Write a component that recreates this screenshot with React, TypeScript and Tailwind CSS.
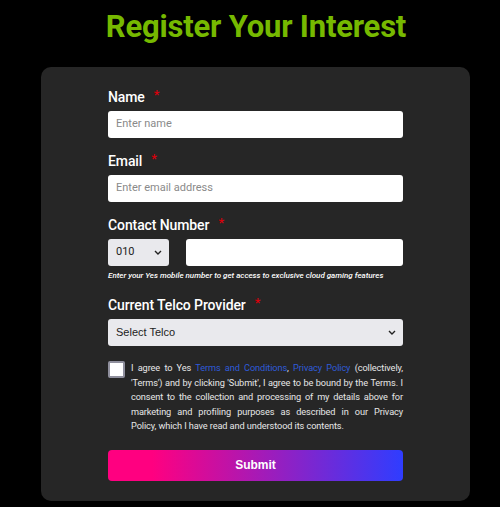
import React from "react";

const labelFont = { fontFamily: "Roboto, 'Liberation Sans', sans-serif" };

function Label({ children }: { children: React.ReactNode }) {
  return (
    <div className="flex items-start text-[14px] font-medium leading-[18px] tracking-[-0.1px] text-white" style={labelFont}>
      <span>{children}</span>
      <span className="ml-[9px] text-[13px] leading-[14px] text-[#d9000b]">*</span>
    </div>
  );
}

function Chevron() {
  return (
    <svg width="8" height="5" viewBox="0 0 8 5" className="shrink-0">
      <path d="M1 1l3 3 3-3" fill="none" stroke="#222" strokeWidth="1.4" />
    </svg>
  );
}

const consentLines: React.ReactNode[] = [
  <>
    I agree to Yes <span className="text-[#2f5bd8]">Terms and Conditions</span>,{" "}
    <span className="text-[#2f5bd8]">Privacy Policy</span> (collectively,
  </>,
  <>'Terms') and by clicking 'Submit', I agree to be bound by the Terms. I</>,
  <>consent to the collection and processing of my details above for</>,
  <>marketing and profiling purposes as described in our Privacy</>,
];

export default function App() {
  return (
    <div className="min-h-[507px] w-[500px] bg-black pt-[9px]" style={labelFont}>
      <h1 className="pl-[12px] text-center text-[31px] font-bold leading-[36px] tracking-[-0.2px] text-[#76b900]">
        Register Your Interest
      </h1>
      <div className="ml-[41px] mr-[30px] mt-[22px] rounded-[10px] bg-[#262626] px-[67px] pb-[20px] pt-[21px]">
        <Label>Name</Label>
        <div className="mt-[5px] flex h-[27px] items-center rounded-[3px] bg-white px-[8px] text-[11px] text-[#8a8a8a]">
          Enter name
        </div>

        <div className="mt-[14px]">
          <Label>Email</Label>
        </div>
        <div className="mt-[5px] flex h-[27px] items-center rounded-[3px] bg-white px-[8px] text-[11px] text-[#8a8a8a]">
          Enter email address
        </div>

        <div className="mt-[14px]">
          <Label>Contact Number</Label>
        </div>
        <div className="mt-[5px] flex gap-[17px]">
          <div className="flex h-[27px] w-[61px] items-center justify-between rounded-[3px] bg-[#e9e9ed] pl-[8px] pr-[7px] text-[11px] text-[#222]">
            <span>010</span>
            <Chevron />
          </div>
          <div className="h-[27px] flex-1 rounded-[3px] bg-white" />
        </div>
        <p className="mt-[4px] whitespace-nowrap text-[8px] font-medium italic leading-[12px] text-white">
          Enter your Yes mobile number to get access to exclusive cloud gaming features
        </p>

        <div className="mt-[14px]">
          <Label>Current Telco Provider</Label>
        </div>
        <div className="mt-[5px] flex h-[27px] items-center justify-between rounded-[3px] bg-[#e9e9ed] pl-[8px] pr-[7px] text-[11px] text-[#222]" style={{ fontFamily: "'Liberation Sans', Arial, sans-serif" }}>
          <span>Select Telco</span>
          <Chevron />
        </div>

        <div className="mt-[15px] flex gap-[6px]">
          <div className="h-[17px] w-[17px] shrink-0 rounded-[2px] border-[2px] border-[#8f8f9d] bg-white" />
          <div className="min-w-0 flex-1 text-[9.2px] leading-[14.5px] tracking-[-0.1px] text-[#e6e6e6]">
            {consentLines.map((line, i) => (
              <span key={i} className="block whitespace-nowrap text-justify [text-align-last:justify]">
                {line}
              </span>
            ))}
            <span className="block">Policy, which I have read and understood its contents.</span>
          </div>
        </div>

        <button
          className="mt-[16px] flex h-[31px] w-full items-center justify-center rounded-[4px] bg-linear-to-r/srgb from-[#ff0080] from-15% to-[#2f3dff] text-[12px] font-bold text-white"
          style={{ fontFamily: "'Liberation Sans', Arial, sans-serif" }}
        >
          Submit
        </button>
      </div>
    </div>
  );
}
